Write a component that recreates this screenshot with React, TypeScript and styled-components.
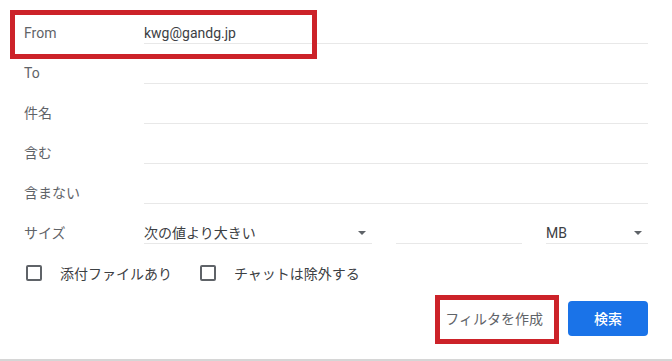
import React from "react";
import styled, { createGlobalStyle } from "styled-components";

const GlobalStyle = createGlobalStyle`
  body {
    margin: 0;
    background: #ffffff;
    font-family: Roboto, "Noto Sans CJK JP", sans-serif;
  }
`;

const Panel = styled.div`
  position: relative;
  width: 672px;
  height: 361px;
  box-sizing: border-box;
  padding: 4px 24px 0 24px;
  border-bottom: 2px solid #d6d6d6;
  overflow: hidden;
`;

const Row = styled.div`
  display: grid;
  grid-template-columns: 120px 1fr;
  height: 40px;
`;

const Label = styled.div`
  align-self: end;
  font-size: 14px;
  line-height: 20px;
  padding-bottom: 1px;
  color: #5f6368;
`;

const Field = styled.div`
  display: flex;
  align-items: flex-end;
  border-bottom: 1px solid #e8e8e8;
  font-size: 14px;
  line-height: 20px;
  color: #3c4043;
`;

const SizeFields = styled.div`
  display: flex;
  align-items: stretch;
  gap: 24px;
`;

const Select = styled.div<{ $w: number }>`
  width: ${(p) => p.$w}px;
  display: flex;
  align-items: flex-end;
  justify-content: space-between;
  border-bottom: 1px solid #e8e8e8;
  font-size: 14px;
  line-height: 20px;
  color: #3c4043;
`;

const Arrow = styled.span`
  width: 0;
  height: 0;
  border-left: 4px solid transparent;
  border-right: 4px solid transparent;
  border-top: 4px solid #5f6368;
  margin: 0 6px 8px 0;
`;

const Checks = styled.div`
  display: flex;
  align-items: center;
  height: 30px;
  margin-top: 14px;
  padding-left: 2px;
  gap: 28px;
`;

const CheckItem = styled.label`
  display: flex;
  align-items: center;
  gap: 18px;
  font-size: 14px;
  color: #3c4043;
`;

const Box = styled.span`
  width: 12px;
  height: 12px;
  border: 2px solid #5f6368;
  border-radius: 2px;
`;

const Actions = styled.div`
  display: flex;
  justify-content: flex-end;
  align-items: center;
  gap: 17px;
  margin-top: 12px;
`;

const TextButton = styled.button`
  height: 36px;
  padding: 0 8px;
  border: none;
  background: transparent;
  font-family: inherit;
  font-size: 14px;
  color: #5f6368;
`;

const PrimaryButton = styled.button`
  width: 80px;
  height: 35px;
  border: none;
  border-radius: 4px;
  background: #1a73e8;
  color: #ffffff;
  font-family: inherit;
  font-size: 14px;
  font-weight: 500;
`;

const Highlight = styled.div<{ $x: number; $y: number; $w: number; $h: number }>`
  position: absolute;
  left: ${(p) => p.$x}px;
  top: ${(p) => p.$y}px;
  width: ${(p) => p.$w}px;
  height: ${(p) => p.$h}px;
  box-sizing: border-box;
  border: 5px solid #cc2229;
  pointer-events: none;
`;

const fields = [
  { label: "From", value: "kwg@gandg.jp" },
  { label: "To", value: "" },
  { label: "件名", value: "" },
  { label: "含む", value: "" },
  { label: "含まない", value: "" },
];

export default function App() {
  return (
    <>
      <GlobalStyle />
      <Panel>
        {fields.map((f) => (
          <Row key={f.label}>
            <Label>{f.label}</Label>
            <Field>{f.value}</Field>
          </Row>
        ))}
        <Row>
          <Label>サイズ</Label>
          <SizeFields>
            <Select $w={228}>
              次の値より大きい
              <Arrow />
            </Select>
            <Select $w={126} />
            <Select $w={102}>
              MB
              <Arrow />
            </Select>
          </SizeFields>
        </Row>
        <Checks>
          <CheckItem>
            <Box />
            添付ファイルあり
          </CheckItem>
          <CheckItem>
            <Box />
            チャットは除外する
          </CheckItem>
        </Checks>
        <Actions>
          <TextButton>フィルタを作成</TextButton>
          <PrimaryButton>検索</PrimaryButton>
        </Actions>
        <Highlight $x={10} $y={10} $w={307} $h={49} />
        <Highlight $x={435} $y={295} $w={124} $h={49} />
      </Panel>
    </>
  );
}
